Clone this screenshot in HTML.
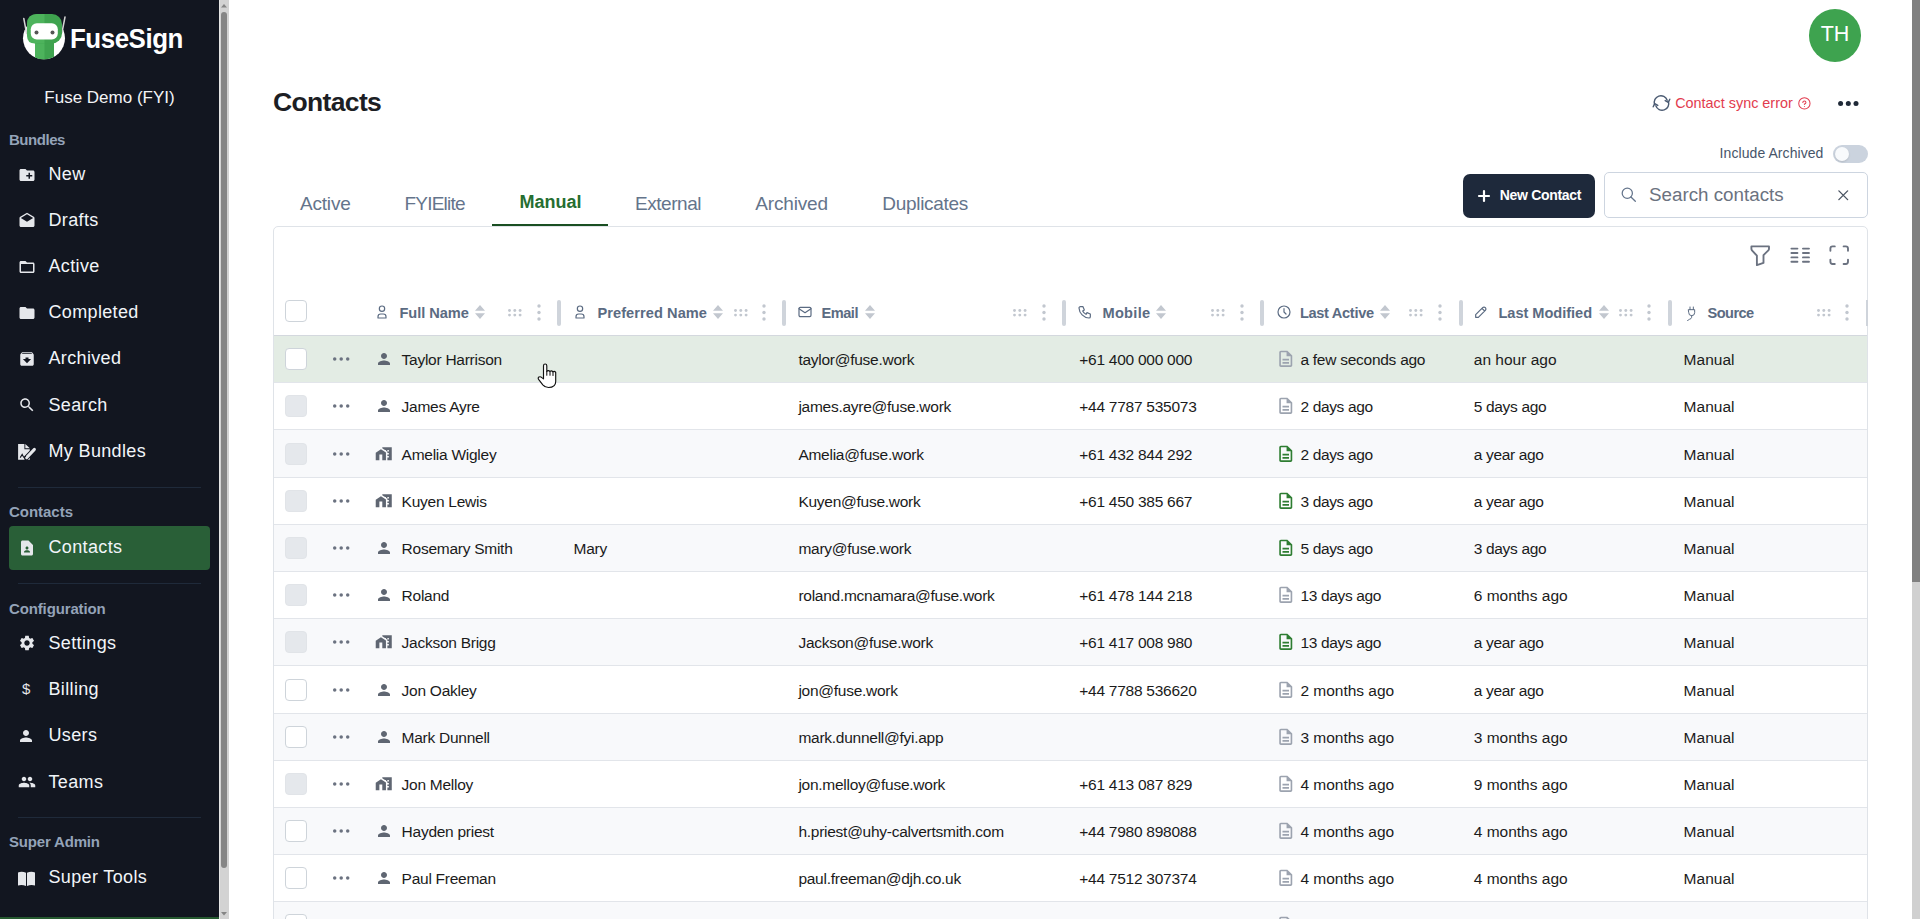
<!DOCTYPE html><html><head><meta charset="utf-8"><title>Contacts</title><style>
*{margin:0;padding:0;box-sizing:border-box}
html,body{width:1920px;height:919px;overflow:hidden;background:#fff;font-family:"Liberation Sans",sans-serif}
.t{position:absolute;white-space:nowrap}
.i{position:absolute;overflow:visible}
.b{position:absolute}
</style></head><body>
<div class="b" style="left:0px;top:0px;width:219px;height:919px;background:#121620"></div>
<div class="b" style="left:0px;top:917px;width:219px;height:2px;background:#265a30"></div>
<div class="b" style="left:219px;top:0px;width:10px;height:919px;background:#d3d3d3;border-left:1px solid #e6e6e6"></div>
<div class="b" style="left:221px;top:12px;width:6px;height:856px;background:#858585;border-radius:3px"></div>
<svg class="i" style="left:221px;top:3.5px;width:6px;height:3.5px;" viewBox="0 0 6 3.5"><path d="M0 3.5 L3 0 L6 3.5Z" fill="#858585"/></svg>
<svg class="i" style="left:221px;top:911.5px;width:6px;height:3.5px;" viewBox="0 0 6 3.5"><path d="M0 0 L3 3.5 L6 0Z" fill="#858585"/></svg>
<svg class="i" style="left:23px;top:13.5px;width:42px;height:46px;" viewBox="0 0 42 46">
<defs><clipPath id="lc"><circle cx="21" cy="24.3" r="21"/></clipPath></defs>
<circle cx="21" cy="24.3" r="21" fill="#fff"/>
<g clip-path="url(#lc)">
<rect x="12" y="26" width="19" height="22" fill="#3fa34f"/>
<rect x="12" y="26" width="9.5" height="22" fill="#4db35c"/>
</g>
<line x1="0.8" y1="4.5" x2="3.6" y2="19.5" stroke="#d4d4d4" stroke-width="1.5" stroke-linecap="round"/>
<line x1="42" y1="3" x2="39" y2="18.5" stroke="#d4d4d4" stroke-width="1.5" stroke-linecap="round"/>
<rect x="4" y="0" width="35" height="29.5" rx="10" fill="#3fa34f"/>
<path d="M14 0 H21.5 V29.5 H12 Q4 29.5 4 21.5 V10 Q4 0 14 0Z" fill="#4db35c"/>
<rect x="7.8" y="9.2" width="27" height="16.2" rx="6" fill="#fff"/>
<circle cx="13.5" cy="18.5" r="2" fill="#555"/>
<circle cx="29.5" cy="18.5" r="2" fill="#555"/>
</svg>
<div class="t " style="left:70px;top:25.10px;font-size:28px;line-height:28px;color:#fff;font-weight:bold;letter-spacing:-0.5px;transform:scaleX(0.925);transform-origin:0 0">FuseSign</div>
<div class="t" style="left:-90.5px;width:400px;text-align:center;top:89.11px;font-size:17px;line-height:17px;color:#f3f4f6">Fuse Demo (FYI)</div>
<div class="t " style="left:9px;top:132.10px;font-size:15px;line-height:15px;color:#94a3b8;font-weight:bold;letter-spacing:0px;letter-spacing:-0.462px">Bundles</div>
<div class="t " style="left:48.5px;top:165.36px;font-size:18px;line-height:18px;color:#f1f5f9;letter-spacing:0.35px">New</div>
<svg class="i" style="left:17.5px;top:165.6px;width:18px;height:18px;" viewBox="0 0 24 24"><path d="M20 6h-8l-2-2H4c-1.11 0-1.99.89-1.99 2L2 18c0 1.11.89 2 2 2h16c1.11 0 2-.89 2-2V8c0-1.11-.89-2-2-2zm-1 8h-3v3h-2v-3h-3v-2h3V9h2v3h3v2z" fill="#e5e7eb"/></svg>
<div class="t " style="left:48.5px;top:211.36px;font-size:18px;line-height:18px;color:#f1f5f9;letter-spacing:0.35px">Drafts</div>
<svg class="i" style="left:17.5px;top:211.6px;width:18px;height:18px;" viewBox="0 0 24 24"><path d="M21.99 8c0-.72-.37-1.35-.94-1.7L12 1 2.95 6.3C2.38 6.65 2 7.28 2 8v10c0 1.1.9 2 2 2h16c1.1 0 2-.9 2-2l-.01-10zM12 13L3.74 7.84 12 3l8.26 4.84L12 13z" fill="#e5e7eb"/></svg>
<div class="t " style="left:48.5px;top:257.36px;font-size:18px;line-height:18px;color:#f1f5f9;letter-spacing:0.35px">Active</div>
<svg class="i" style="left:17.5px;top:257.6px;width:18px;height:18px;" viewBox="0 0 24 24"><path d="M20 6h-8l-2-2H4c-1.1 0-1.99.9-1.99 2L2 18c0 1.1.9 2 2 2h16c1.1 0 2-.9 2-2V8c0-1.1-.9-2-2-2zm0 12H4V8h16v10z" fill="#e5e7eb"/></svg>
<div class="t " style="left:48.5px;top:303.36px;font-size:18px;line-height:18px;color:#f1f5f9;letter-spacing:0.35px">Completed</div>
<svg class="i" style="left:17.5px;top:303.6px;width:18px;height:18px;" viewBox="0 0 24 24"><path d="M10 4H4c-1.1 0-1.99.9-1.99 2L2 18c0 1.1.9 2 2 2h16c1.1 0 2-.9 2-2V8c0-1.1-.9-2-2-2h-8l-2-2z" fill="#e5e7eb"/></svg>
<div class="t " style="left:48.5px;top:349.36px;font-size:18px;line-height:18px;color:#f1f5f9;letter-spacing:0.35px">Archived</div>
<svg class="i" style="left:17.5px;top:349.6px;width:18px;height:18px;" viewBox="0 0 24 24"><path d="M20.54 5.23l-1.39-1.68C18.88 3.21 18.47 3 18 3H6c-.47 0-.88.21-1.16.55L3.46 5.23C3.17 5.57 3 6.02 3 6.5V19c0 1.1.9 2 2 2h14c1.1 0 2-.9 2-2V6.5c0-.48-.17-.93-.46-1.27zM12 17.5L6.5 12H10v-2h4v2h3.5L12 17.5zM5.12 5l.81-1h12l.94 1H5.12z" fill="#e5e7eb"/></svg>
<div class="t " style="left:48.5px;top:395.76px;font-size:18px;line-height:18px;color:#f1f5f9;letter-spacing:0.35px">Search</div>
<svg class="i" style="left:17.5px;top:396px;width:18px;height:18px;" viewBox="0 0 24 24"><path d="M15.5 14h-.79l-.28-.27C15.41 12.59 16 11.11 16 9.5 16 5.91 13.09 3 9.5 3S3 5.91 3 9.5 5.91 16 9.5 16c1.61 0 3.09-.59 4.23-1.57l.27.28v.79l5 4.99L20.49 19l-4.99-5zm-6 0C7.01 14 5 11.99 5 9.5S7.01 5 9.5 5 14 7.01 14 9.5 11.99 14 9.5 14z" fill="#e5e7eb"/></svg>
<div class="t " style="left:48.5px;top:442.06px;font-size:18px;line-height:18px;color:#f1f5f9;letter-spacing:0.35px">My Bundles</div>
<svg class="i" style="left:14px;top:438px;width:26px;height:26px;" viewBox="0 0 26 26"><path d="M4.1 5.9 H10.4 V11.2 H15.8 V13.6 L11.2 18.6 L10.6 21.8 H4.1Z" fill="#e5e7eb"/><path d="M11.3 5.9 L15.8 10.3 H11.3Z" fill="#e5e7eb"/><path d="M10.8 21.8 H15.8 V17.5 L13 20.6Z" fill="#e5e7eb"/><path d="M12.4 19.8 L20.6 11.2" stroke="#121620" stroke-width="5" stroke-linecap="round"/><path d="M12.6 19.6 L20.4 11.4" stroke="#e5e7eb" stroke-width="3" stroke-linecap="round"/><path d="M6.2 19.6 L8.2 16.4 L9.6 19.2 L12 18.4" stroke="#121620" stroke-width="1.1" fill="none"/></svg>
<div class="b" style="left:18px;top:487px;width:183px;height:1px;background:#1f2a3a"></div>
<div class="t " style="left:9px;top:504.00px;font-size:15px;line-height:15px;color:#94a3b8;font-weight:bold;letter-spacing:0px;letter-spacing:-0.025px">Contacts</div>
<div class="b" style="left:9px;top:526px;width:201px;height:44px;background:#295f37;border-radius:4px"></div>
<svg class="i" style="left:18px;top:538.5px;width:18px;height:18px;" viewBox="0 0 24 24"><path d="M14 2H6c-1.1 0-1.99.9-1.99 2L4 20c0 1.1.89 2 1.99 2H18c1.1 0 2-.9 2-2V8l-6-6zm-2 8c1.1 0 2 .9 2 2s-.9 2-2 2-2-.9-2-2 .9-2 2-2zm4 8H8v-.57c0-.81.48-1.53 1.22-1.85.85-.37 1.790-.58 2.78-.58.99 0 1.93.21 2.78.58.74.32 1.22 1.04 1.22 1.85V18z" fill="#e5e7eb"/></svg>
<div class="t " style="left:48.5px;top:537.66px;font-size:18px;line-height:18px;color:#f1f5f9;letter-spacing:0.35px">Contacts</div>
<div class="b" style="left:18px;top:583px;width:183px;height:1px;background:#1f2a3a"></div>
<div class="t " style="left:9px;top:600.50px;font-size:15px;line-height:15px;color:#94a3b8;font-weight:bold;letter-spacing:0px;letter-spacing:-0.134px">Configuration</div>
<div class="t " style="left:48.5px;top:633.96px;font-size:18px;line-height:18px;color:#f1f5f9;letter-spacing:0.35px">Settings</div>
<svg class="i" style="left:17.5px;top:634px;width:18px;height:18px;" viewBox="0 0 24 24"><path d="M19.14 12.94c.04-.3.06-.61.06-.94 0-.32-.02-.64-.07-.94l2.03-1.58c.18-.14.23-.41.12-.61l-1.92-3.32c-.12-.22-.37-.29-.59-.22l-2.39.96c-.5-.38-1.03-.7-1.62-.94l-.36-2.54c-.04-.24-.24-.41-.48-.41h-3.84c-.24 0-.43.17-.47.41l-.36 2.54c-.59.24-1.130.57-1.62.94l-2.39-.96c-.22-.08-.47 0-.59.22L2.74 8.87c-.12.21-.08.47.12.61l2.030 1.58c-.05.3-.09.63-.09.94s.02.64.07.94l-2.03 1.58c-.18.14-.23.41-.12.61l1.92 3.32c.12.22.37.29.59.22l2.39-.96c.5.38 1.03.7 1.62.94l.36 2.54c.05.24.24.41.48.41h3.84c.24 0 .44-.17.47-.41l.36-2.54c.59-.24 1.13-.56 1.62-.94l2.39.96c.22.08.47 0 .59-.22l1.92-3.32c.12-.22.07-.47-.12-.61l-2.01-1.58zM12 15.6c-1.98 0-3.6-1.62-3.6-3.6s1.62-3.6 3.6-3.6 3.6 1.62 3.6 3.6-1.62 3.6-3.6 3.6z" fill="#e5e7eb"/></svg>
<div class="t " style="left:48.5px;top:680.26px;font-size:18px;line-height:18px;color:#f1f5f9;letter-spacing:0.35px">Billing</div>
<div class="t " style="left:22px;top:681.30px;font-size:15px;line-height:15px;color:#e5e7eb">$</div>
<div class="t " style="left:48.5px;top:725.96px;font-size:18px;line-height:18px;color:#f1f5f9;letter-spacing:0.35px">Users</div>
<svg class="i" style="left:17px;top:726.5px;width:18px;height:18px;" viewBox="0 0 24 24"><path d="M12 12c2.21 0 4-1.79 4-4s-1.79-4-4-4-4 1.79-4 4 1.79 4 4 4zm0 2c-2.67 0-8 1.34-8 4v2h16v-2c0-2.66-5.33-4-8-4z" fill="#e5e7eb"/></svg>
<div class="t " style="left:48.5px;top:772.76px;font-size:18px;line-height:18px;color:#f1f5f9;letter-spacing:0.35px">Teams</div>
<svg class="i" style="left:17.5px;top:773px;width:18px;height:18px;" viewBox="0 0 24 24"><path d="M16 11c1.66 0 2.99-1.34 2.99-3S17.66 5 16 5c-1.66 0-3 1.34-3 3s1.34 3 3 3zm-8 0c1.66 0 2.99-1.34 2.99-3S9.66 5 8 5C6.34 5 5 6.34 5 8s1.34 3 3 3zm0 2c-2.33 0-7 1.17-7 3.5V19h14v-2.5c0-2.33-4.67-3.5-7-3.5zm8 0c-.29 0-.62.02-.97.05 1.16.84 1.97 1.97 1.97 3.45V19h6v-2.5c0-2.33-4.67-3.5-7-3.5z" fill="#e5e7eb"/></svg>
<div class="b" style="left:18px;top:817px;width:183px;height:1px;background:#1f2a3a"></div>
<div class="t " style="left:9px;top:833.90px;font-size:15px;line-height:15px;color:#94a3b8;font-weight:bold;letter-spacing:0px;letter-spacing:-0.178px">Super Admin</div>
<div class="t " style="left:48.5px;top:867.76px;font-size:18px;line-height:18px;color:#f1f5f9;letter-spacing:0.35px">Super Tools</div>
<svg class="i" style="left:18px;top:870.5px;width:17px;height:15px;" viewBox="0 0 17 15"><path d="M0 1.5 Q4 0 8 1.8 V15 Q4 13.3 0 14.5Z M9 1.8 Q13 0 17 1.5 V14.5 Q13 13.3 9 15Z" fill="#e5e7eb"/></svg>
<div class="b" style="left:1912px;top:0px;width:8px;height:919px;background:#d0d0d0"></div>
<div class="b" style="left:1912px;top:0px;width:8px;height:582px;background:#808080"></div>
<div class="b" style="left:1809px;top:9px;width:52px;height:52.5px;border-radius:50%;background:#3ea34f"></div>
<div class="t" style="left:1805.0px;width:60px;text-align:center;top:24.40px;font-size:21.5px;line-height:21.5px;color:#fff">TH</div>
<div class="t " style="left:273px;top:89.07px;font-size:26.5px;line-height:26.5px;color:#1c1e24;font-weight:bold;letter-spacing:-0.654px">Contacts</div>
<svg class="i" style="left:1651.5px;top:95px;width:19px;height:16px;" viewBox="0 0 19 16"><path d="M2.6 9.5 A6.6 6.6 0 0 1 15.2 5.2 M16.4 6.5 A6.6 6.6 0 0 1 3.8 10.8" fill="none" stroke="#4b5b72" stroke-width="1.4" stroke-linecap="round"/><path d="M13.2 5.6 L16.3 7.4 L17.8 4.2 M5.8 10.4 L2.7 8.6 L1.2 11.8" fill="none" stroke="#4b5b72" stroke-width="1.4" stroke-linecap="round" stroke-linejoin="round"/></svg>
<div class="t " style="left:1675.2px;top:96.01px;font-size:14.4px;line-height:14.4px;color:#e23b4e">Contact sync error</div>
<svg class="i" style="left:1798.2px;top:97px;width:12.8px;height:12.8px;" viewBox="0 0 24 24"><circle cx="12" cy="12" r="10.6" fill="none" stroke="#e23b4e" stroke-width="1.9"/><path d="M12 17.6v.01M12 14.2v-.9a2.9 2.9 0 1 0 -2.9-2.9" fill="none" stroke="#e23b4e" stroke-width="1.9" stroke-linecap="round"/></svg>
<svg class="i" style="left:1836px;top:99px;width:24px;height:9px;" viewBox="0 0 24 9"><circle cx="4.6" cy="4.5" r="2.5" fill="#1f2937"/><circle cx="12.3" cy="4.5" r="2.5" fill="#1f2937"/><circle cx="20" cy="4.5" r="2.5" fill="#1f2937"/></svg>
<div class="t " style="left:1719.6px;top:146.15px;font-size:14px;line-height:14px;color:#475569;letter-spacing:0.071px">Include Archived</div>
<div class="b" style="left:1833px;top:145px;width:35px;height:18px;background:#cbd3de;border-radius:9px"></div>
<div class="b" style="left:1835px;top:147px;width:14px;height:14px;background:#f8fafc;border-radius:50%;box-shadow:0 1px 2px rgba(0,0,0,.12)"></div>
<div class="b" style="left:1463px;top:174px;width:132px;height:44px;background:#1e293b;border-radius:7px"></div>
<svg class="i" style="left:1477.5px;top:189.5px;width:12px;height:12px;" viewBox="0 0 12 12"><path d="M6 1v10M1 6h10" stroke="#fff" stroke-width="2.2" stroke-linecap="round"/></svg>
<div class="t " style="left:1499.7px;top:188.35px;font-size:14px;line-height:14px;color:#fff;font-weight:bold;letter-spacing:-0.3px">New Contact</div>
<div class="b" style="left:1604px;top:172px;width:264px;height:46px;border:1px solid #cdd5e0;border-radius:5px;background:#fff"></div>
<svg class="i" style="left:1620px;top:185.6px;width:17.5px;height:17.5px;" viewBox="0 0 24 24"><circle cx="10" cy="10" r="7" fill="none" stroke="#64748b" stroke-width="1.7"/><path d="M21 21l-6-6" stroke="#64748b" stroke-width="1.7" stroke-linecap="round"/></svg>
<div class="t " style="left:1649px;top:186.09px;font-size:18.8px;line-height:18.8px;color:#6b7280">Search contacts</div>
<svg class="i" style="left:1837.5px;top:189.5px;width:10.5px;height:10.5px;" viewBox="0 0 12 12"><path d="M1 1l10 10M11 1L1 11" stroke="#4b5563" stroke-width="1.6" stroke-linecap="round"/></svg>
<div class="t " style="left:300px;top:193.92px;font-size:19px;line-height:19px;color:#64748b;letter-spacing:-0.198px">Active</div>
<div class="t " style="left:404.5px;top:193.92px;font-size:19px;line-height:19px;color:#64748b;letter-spacing:-0.788px">FYIElite</div>
<div class="t " style="left:635px;top:193.92px;font-size:19px;line-height:19px;color:#64748b;letter-spacing:-0.457px">External</div>
<div class="t " style="left:755.2px;top:193.92px;font-size:19px;line-height:19px;color:#64748b;letter-spacing:-0.146px">Archived</div>
<div class="t " style="left:882.3px;top:193.92px;font-size:19px;line-height:19px;color:#64748b;letter-spacing:-0.301px">Duplicates</div>
<div class="t " style="left:519.5px;top:193.06px;font-size:18px;line-height:18px;color:#266e31;font-weight:bold">Manual</div>
<div class="b" style="left:492px;top:224px;width:116px;height:2.2px;background:#1a4f22"></div>
<div class="b" style="left:273px;top:226px;width:1595px;height:800px;border:1px solid #dfe3e8;border-radius:5px;background:#fff"></div>
<svg class="i" style="left:1746.9px;top:241.8px;width:26.4px;height:26.4px;" viewBox="0 0 24 24"><path d="M4 4h16v2.172a2 2 0 0 1 -.586 1.414l-4.414 4.414v7l-6 2v-8.5l-4.48 -4.928a2 2 0 0 1 -.52 -1.345v-2.227z" fill="none" stroke="#6b7280" stroke-width="1.7" stroke-linecap="round" stroke-linejoin="round"/></svg>
<svg class="i" style="left:1786.8px;top:241.7px;width:26.4px;height:26.4px;" viewBox="0 0 24 24"><path d="M4 6h5.5M4 10h5.5M4 14h5.5M4 18h5.5M14.5 6h5.5M14.5 10h5.5M14.5 14h5.5M14.5 18h5.5" fill="none" stroke="#6b7280" stroke-width="1.7" stroke-linecap="round" stroke-linejoin="round"/></svg>
<svg class="i" style="left:1825.9px;top:241.9px;width:26.4px;height:26.4px;" viewBox="0 0 24 24"><path d="M4 8v-2a2 2 0 0 1 2 -2h2M4 16v2a2 2 0 0 0 2 2h2M16 4h2a2 2 0 0 1 2 2v2M16 20h2a2 2 0 0 0 2 -2v-2" fill="none" stroke="#6b7280" stroke-width="1.7" stroke-linecap="round" stroke-linejoin="round"/></svg>
<div class="b" style="left:285px;top:300px;width:22px;height:22px;border:1px solid #ced4da;border-radius:4px;background:#fff"></div>
<div class="b" style="left:274px;top:335px;width:1593px;height:1px;background:#d4d8de"></div>
<svg class="i" style="left:374px;top:303.6px;width:16px;height:16px;" viewBox="0 0 24 24"><circle cx="12" cy="7" r="4" fill="none" stroke="#5b6b82" stroke-width="1.8" stroke-linecap="round" stroke-linejoin="round"/><path d="M6 21v-2a4 4 0 0 1 4 -4h4a4 4 0 0 1 4 4v2z" fill="none" stroke="#5b6b82" stroke-width="1.8" stroke-linecap="round" stroke-linejoin="round"/></svg>
<div class="t " style="left:399.5px;top:305.54px;font-size:14.6px;line-height:14.6px;color:#5b6b82;font-weight:bold;letter-spacing:-0.059px">Full Name</div>
<svg class="i" style="left:475px;top:305px;width:10px;height:14px;" viewBox="0 0 10 14"><path d="M0 5.7L5 0L10 5.7Z M0 8.3L5 14L10 8.3Z" fill="#c2c7cf"/></svg>
<svg class="i" style="left:508px;top:308.5px;width:14px;height:8px;" viewBox="0 0 14 8"><circle cx="1.5" cy="1.5" r="1.45" fill="#c2c7cf"/><circle cx="6.8" cy="1.5" r="1.45" fill="#c2c7cf"/><circle cx="12.1" cy="1.5" r="1.45" fill="#c2c7cf"/><circle cx="1.5" cy="6.1" r="1.45" fill="#c2c7cf"/><circle cx="6.8" cy="6.1" r="1.45" fill="#c2c7cf"/><circle cx="12.1" cy="6.1" r="1.45" fill="#c2c7cf"/></svg>
<svg class="i" style="left:537px;top:303.5px;width:4px;height:17px;" viewBox="0 0 4 17"><circle cx="2" cy="2" r="1.7" fill="#c2c7cf"/><circle cx="2" cy="8.5" r="1.7" fill="#c2c7cf"/><circle cx="2" cy="15" r="1.7" fill="#c2c7cf"/></svg>
<div class="b" style="left:557px;top:300px;width:4px;height:26px;background:#cfd4db;border-radius:2px"></div>
<svg class="i" style="left:572px;top:303.6px;width:16px;height:16px;" viewBox="0 0 24 24"><circle cx="12" cy="7" r="4" fill="none" stroke="#5b6b82" stroke-width="1.8" stroke-linecap="round" stroke-linejoin="round"/><path d="M6 21v-2a4 4 0 0 1 4 -4h4a4 4 0 0 1 4 4v2z" fill="none" stroke="#5b6b82" stroke-width="1.8" stroke-linecap="round" stroke-linejoin="round"/></svg>
<div class="t " style="left:597.5px;top:305.54px;font-size:14.6px;line-height:14.6px;color:#5b6b82;font-weight:bold;letter-spacing:0.058px">Preferred Name</div>
<svg class="i" style="left:713px;top:305px;width:10px;height:14px;" viewBox="0 0 10 14"><path d="M0 5.7L5 0L10 5.7Z M0 8.3L5 14L10 8.3Z" fill="#c2c7cf"/></svg>
<svg class="i" style="left:734px;top:308.5px;width:14px;height:8px;" viewBox="0 0 14 8"><circle cx="1.5" cy="1.5" r="1.45" fill="#c2c7cf"/><circle cx="6.8" cy="1.5" r="1.45" fill="#c2c7cf"/><circle cx="12.1" cy="1.5" r="1.45" fill="#c2c7cf"/><circle cx="1.5" cy="6.1" r="1.45" fill="#c2c7cf"/><circle cx="6.8" cy="6.1" r="1.45" fill="#c2c7cf"/><circle cx="12.1" cy="6.1" r="1.45" fill="#c2c7cf"/></svg>
<svg class="i" style="left:762px;top:303.5px;width:4px;height:17px;" viewBox="0 0 4 17"><circle cx="2" cy="2" r="1.7" fill="#c2c7cf"/><circle cx="2" cy="8.5" r="1.7" fill="#c2c7cf"/><circle cx="2" cy="15" r="1.7" fill="#c2c7cf"/></svg>
<div class="b" style="left:782px;top:300px;width:4px;height:26px;background:#cfd4db;border-radius:2px"></div>
<svg class="i" style="left:797px;top:303.6px;width:16px;height:16px;" viewBox="0 0 24 24"><rect x="3" y="5" width="18" height="14" rx="2" fill="none" stroke="#5b6b82" stroke-width="1.8" stroke-linecap="round" stroke-linejoin="round"/><path d="M3 7l9 6l9 -6" fill="none" stroke="#5b6b82" stroke-width="1.8" stroke-linecap="round" stroke-linejoin="round"/></svg>
<div class="t " style="left:821.5px;top:305.54px;font-size:14.6px;line-height:14.6px;color:#5b6b82;font-weight:bold;letter-spacing:-0.488px">Email</div>
<svg class="i" style="left:865px;top:305px;width:10px;height:14px;" viewBox="0 0 10 14"><path d="M0 5.7L5 0L10 5.7Z M0 8.3L5 14L10 8.3Z" fill="#c2c7cf"/></svg>
<svg class="i" style="left:1013px;top:308.5px;width:14px;height:8px;" viewBox="0 0 14 8"><circle cx="1.5" cy="1.5" r="1.45" fill="#c2c7cf"/><circle cx="6.8" cy="1.5" r="1.45" fill="#c2c7cf"/><circle cx="12.1" cy="1.5" r="1.45" fill="#c2c7cf"/><circle cx="1.5" cy="6.1" r="1.45" fill="#c2c7cf"/><circle cx="6.8" cy="6.1" r="1.45" fill="#c2c7cf"/><circle cx="12.1" cy="6.1" r="1.45" fill="#c2c7cf"/></svg>
<svg class="i" style="left:1042px;top:303.5px;width:4px;height:17px;" viewBox="0 0 4 17"><circle cx="2" cy="2" r="1.7" fill="#c2c7cf"/><circle cx="2" cy="8.5" r="1.7" fill="#c2c7cf"/><circle cx="2" cy="15" r="1.7" fill="#c2c7cf"/></svg>
<div class="b" style="left:1062px;top:300px;width:4px;height:26px;background:#cfd4db;border-radius:2px"></div>
<svg class="i" style="left:1077px;top:303.6px;width:16px;height:16px;" viewBox="0 0 24 24"><path d="M5 4h4l2 5l-2.5 1.5a11 11 0 0 0 5 5l1.5 -2.5l5 2v4a2 2 0 0 1 -2 2a16 16 0 0 1 -15 -15a2 2 0 0 1 2 -2" fill="none" stroke="#5b6b82" stroke-width="1.8" stroke-linecap="round" stroke-linejoin="round"/></svg>
<div class="t " style="left:1102.5px;top:305.54px;font-size:14.6px;line-height:14.6px;color:#5b6b82;font-weight:bold;letter-spacing:0.274px">Mobile</div>
<svg class="i" style="left:1156px;top:305px;width:10px;height:14px;" viewBox="0 0 10 14"><path d="M0 5.7L5 0L10 5.7Z M0 8.3L5 14L10 8.3Z" fill="#c2c7cf"/></svg>
<svg class="i" style="left:1211px;top:308.5px;width:14px;height:8px;" viewBox="0 0 14 8"><circle cx="1.5" cy="1.5" r="1.45" fill="#c2c7cf"/><circle cx="6.8" cy="1.5" r="1.45" fill="#c2c7cf"/><circle cx="12.1" cy="1.5" r="1.45" fill="#c2c7cf"/><circle cx="1.5" cy="6.1" r="1.45" fill="#c2c7cf"/><circle cx="6.8" cy="6.1" r="1.45" fill="#c2c7cf"/><circle cx="12.1" cy="6.1" r="1.45" fill="#c2c7cf"/></svg>
<svg class="i" style="left:1240px;top:303.5px;width:4px;height:17px;" viewBox="0 0 4 17"><circle cx="2" cy="2" r="1.7" fill="#c2c7cf"/><circle cx="2" cy="8.5" r="1.7" fill="#c2c7cf"/><circle cx="2" cy="15" r="1.7" fill="#c2c7cf"/></svg>
<div class="b" style="left:1260px;top:300px;width:4px;height:26px;background:#cfd4db;border-radius:2px"></div>
<svg class="i" style="left:1276px;top:303.6px;width:16px;height:16px;" viewBox="0 0 24 24"><circle cx="12" cy="12" r="9" fill="none" stroke="#5b6b82" stroke-width="1.8" stroke-linecap="round" stroke-linejoin="round"/><path d="M12 7v5l3 3" fill="none" stroke="#5b6b82" stroke-width="1.8" stroke-linecap="round" stroke-linejoin="round"/></svg>
<div class="t " style="left:1299.9px;top:305.54px;font-size:14.6px;line-height:14.6px;color:#5b6b82;font-weight:bold;letter-spacing:-0.316px">Last Active</div>
<svg class="i" style="left:1380px;top:305px;width:10px;height:14px;" viewBox="0 0 10 14"><path d="M0 5.7L5 0L10 5.7Z M0 8.3L5 14L10 8.3Z" fill="#c2c7cf"/></svg>
<svg class="i" style="left:1409px;top:308.5px;width:14px;height:8px;" viewBox="0 0 14 8"><circle cx="1.5" cy="1.5" r="1.45" fill="#c2c7cf"/><circle cx="6.8" cy="1.5" r="1.45" fill="#c2c7cf"/><circle cx="12.1" cy="1.5" r="1.45" fill="#c2c7cf"/><circle cx="1.5" cy="6.1" r="1.45" fill="#c2c7cf"/><circle cx="6.8" cy="6.1" r="1.45" fill="#c2c7cf"/><circle cx="12.1" cy="6.1" r="1.45" fill="#c2c7cf"/></svg>
<svg class="i" style="left:1438px;top:303.5px;width:4px;height:17px;" viewBox="0 0 4 17"><circle cx="2" cy="2" r="1.7" fill="#c2c7cf"/><circle cx="2" cy="8.5" r="1.7" fill="#c2c7cf"/><circle cx="2" cy="15" r="1.7" fill="#c2c7cf"/></svg>
<div class="b" style="left:1459px;top:300px;width:4px;height:26px;background:#cfd4db;border-radius:2px"></div>
<svg class="i" style="left:1473px;top:303.6px;width:16px;height:16px;" viewBox="0 0 24 24"><path d="M4 20h4l10.5 -10.5a2.828 2.828 0 1 0 -4 -4l-10.5 10.5v4M13.5 6.5l4 4" fill="none" stroke="#5b6b82" stroke-width="1.8" stroke-linecap="round" stroke-linejoin="round"/></svg>
<div class="t " style="left:1498.5px;top:305.54px;font-size:14.6px;line-height:14.6px;color:#5b6b82;font-weight:bold;letter-spacing:-0.041px">Last Modified</div>
<svg class="i" style="left:1598.5px;top:305px;width:10px;height:14px;" viewBox="0 0 10 14"><path d="M0 5.7L5 0L10 5.7Z M0 8.3L5 14L10 8.3Z" fill="#c2c7cf"/></svg>
<svg class="i" style="left:1619px;top:308.5px;width:14px;height:8px;" viewBox="0 0 14 8"><circle cx="1.5" cy="1.5" r="1.45" fill="#c2c7cf"/><circle cx="6.8" cy="1.5" r="1.45" fill="#c2c7cf"/><circle cx="12.1" cy="1.5" r="1.45" fill="#c2c7cf"/><circle cx="1.5" cy="6.1" r="1.45" fill="#c2c7cf"/><circle cx="6.8" cy="6.1" r="1.45" fill="#c2c7cf"/><circle cx="12.1" cy="6.1" r="1.45" fill="#c2c7cf"/></svg>
<svg class="i" style="left:1647px;top:303.5px;width:4px;height:17px;" viewBox="0 0 4 17"><circle cx="2" cy="2" r="1.7" fill="#c2c7cf"/><circle cx="2" cy="8.5" r="1.7" fill="#c2c7cf"/><circle cx="2" cy="15" r="1.7" fill="#c2c7cf"/></svg>
<div class="b" style="left:1668px;top:300px;width:4px;height:26px;background:#cfd4db;border-radius:2px"></div>
<svg class="i" style="left:1683px;top:303.6px;width:16px;height:16px;" viewBox="0 0 24 24"><path d="M10.5 4.5V8.5M15.5 4.5V8.5M8.5 8.5H17.5V13A4.5 4.5 0 0 1 8.5 13Z M13 17.5V20Q12.6 22.3 9.6 23Q7.8 23.6 6.8 25" fill="none" stroke="#5b6b82" stroke-width="1.5" stroke-linecap="round" stroke-linejoin="round"/></svg>
<div class="t " style="left:1707.5px;top:305.54px;font-size:14.6px;line-height:14.6px;color:#5b6b82;font-weight:bold;letter-spacing:-0.559px">Source</div>
<svg class="i" style="left:1817px;top:308.5px;width:14px;height:8px;" viewBox="0 0 14 8"><circle cx="1.5" cy="1.5" r="1.45" fill="#c2c7cf"/><circle cx="6.8" cy="1.5" r="1.45" fill="#c2c7cf"/><circle cx="12.1" cy="1.5" r="1.45" fill="#c2c7cf"/><circle cx="1.5" cy="6.1" r="1.45" fill="#c2c7cf"/><circle cx="6.8" cy="6.1" r="1.45" fill="#c2c7cf"/><circle cx="12.1" cy="6.1" r="1.45" fill="#c2c7cf"/></svg>
<svg class="i" style="left:1845px;top:303.5px;width:4px;height:17px;" viewBox="0 0 4 17"><circle cx="2" cy="2" r="1.7" fill="#c2c7cf"/><circle cx="2" cy="8.5" r="1.7" fill="#c2c7cf"/><circle cx="2" cy="15" r="1.7" fill="#c2c7cf"/></svg>
<div class="b" style="left:1866px;top:300px;width:1.5px;height:26px;background:#cfd4db"></div>
<div class="b" style="left:274px;top:336px;width:1593px;height:46px;background:#e3ece4"></div>
<div class="b" style="left:274px;top:382px;width:1593px;height:1px;background:#e2e5ea"></div>
<div class="b" style="left:285px;top:348.38px;width:22px;height:22px;background:#fff;border:1px solid #ced4da;border-radius:4px"></div>
<svg class="i" style="left:330px;top:355.98px;width:22px;height:6px;" viewBox="0 0 22 6"><circle cx="4.7" cy="3" r="1.75" fill="#6b7280"/><circle cx="11.2" cy="3" r="1.75" fill="#6b7280"/><circle cx="17.7" cy="3" r="1.75" fill="#6b7280"/></svg>
<svg class="i" style="left:374.8px;top:350.08px;width:18px;height:18px;" viewBox="0 0 24 24"><path d="M12 12c2.21 0 4-1.79 4-4s-1.79-4-4-4-4 1.79-4 4 1.79 4 4 4zm0 2c-2.67 0-8 1.34-8 4v2h16v-2c0-2.66-5.33-4-8-4z" fill="#5f6672"/></svg>
<div class="t " style="left:401.6px;top:351.88px;font-size:15.5px;line-height:15.5px;color:#1b1b1b;letter-spacing:-0.26px">Taylor Harrison</div>
<div class="t " style="left:798.4px;top:351.88px;font-size:15.5px;line-height:15.5px;color:#1b1b1b;letter-spacing:-0.26px">taylor@fuse.work</div>
<div class="t " style="left:1079.3px;top:351.88px;font-size:15.5px;line-height:15.5px;color:#1b1b1b;letter-spacing:-0.26px">+61 400 000 000</div>
<svg class="i" style="left:1275.9px;top:349.08px;width:19.5px;height:19.5px;" viewBox="0 0 24 24"><path d="M8 16h8v2H8zm0-4h8v2H8zm6-10H6c-1.1 0-2 .9-2 2v16c0 1.1.89 2 1.99 2H18c1.1 0 2-.9 2-2V8l-6-6zm4 18H6V4h7v5h5v11z" fill="#9ca3af"/></svg>
<div class="t " style="left:1300.4px;top:351.88px;font-size:15.5px;line-height:15.5px;color:#1b1b1b;letter-spacing:-0.260px">a few seconds ago</div>
<div class="t " style="left:1473.8px;top:351.88px;font-size:15.5px;line-height:15.5px;color:#1b1b1b;letter-spacing:0.000px">an hour ago</div>
<div class="t " style="left:1683.6px;top:351.88px;font-size:15.5px;line-height:15.5px;color:#1b1b1b;letter-spacing:0.020px">Manual</div>
<div class="b" style="left:274px;top:383px;width:1593px;height:46px;background:#fff"></div>
<div class="b" style="left:274px;top:429px;width:1593px;height:1px;background:#e2e5ea"></div>
<div class="b" style="left:285px;top:395.38px;width:22px;height:22px;background:#e5e8ec;border:1px solid #e1e4e8;border-radius:4px"></div>
<svg class="i" style="left:330px;top:402.98px;width:22px;height:6px;" viewBox="0 0 22 6"><circle cx="4.7" cy="3" r="1.75" fill="#6b7280"/><circle cx="11.2" cy="3" r="1.75" fill="#6b7280"/><circle cx="17.7" cy="3" r="1.75" fill="#6b7280"/></svg>
<svg class="i" style="left:374.8px;top:397.08px;width:18px;height:18px;" viewBox="0 0 24 24"><path d="M12 12c2.21 0 4-1.79 4-4s-1.79-4-4-4-4 1.79-4 4 1.79 4 4 4zm0 2c-2.67 0-8 1.34-8 4v2h16v-2c0-2.66-5.33-4-8-4z" fill="#5f6672"/></svg>
<div class="t " style="left:401.6px;top:398.88px;font-size:15.5px;line-height:15.5px;color:#1b1b1b;letter-spacing:-0.26px">James Ayre</div>
<div class="t " style="left:798.4px;top:398.88px;font-size:15.5px;line-height:15.5px;color:#1b1b1b;letter-spacing:-0.26px">james.ayre@fuse.work</div>
<div class="t " style="left:1079.3px;top:398.88px;font-size:15.5px;line-height:15.5px;color:#1b1b1b;letter-spacing:-0.26px">+44 7787 535073</div>
<svg class="i" style="left:1275.9px;top:396.08px;width:19.5px;height:19.5px;" viewBox="0 0 24 24"><path d="M8 16h8v2H8zm0-4h8v2H8zm6-10H6c-1.1 0-2 .9-2 2v16c0 1.1.89 2 1.99 2H18c1.1 0 2-.9 2-2V8l-6-6zm4 18H6V4h7v5h5v11z" fill="#9ca3af"/></svg>
<div class="t " style="left:1300.4px;top:398.88px;font-size:15.5px;line-height:15.5px;color:#1b1b1b;letter-spacing:-0.340px">2 days ago</div>
<div class="t " style="left:1473.8px;top:398.88px;font-size:15.5px;line-height:15.5px;color:#1b1b1b;letter-spacing:-0.340px">5 days ago</div>
<div class="t " style="left:1683.6px;top:398.88px;font-size:15.5px;line-height:15.5px;color:#1b1b1b;letter-spacing:0.020px">Manual</div>
<div class="b" style="left:274px;top:430px;width:1593px;height:47px;background:#f8f9fb"></div>
<div class="b" style="left:274px;top:477px;width:1593px;height:1px;background:#e2e5ea"></div>
<div class="b" style="left:285px;top:443.38px;width:22px;height:22px;background:#e5e8ec;border:1px solid #e1e4e8;border-radius:4px"></div>
<svg class="i" style="left:330px;top:450.98px;width:22px;height:6px;" viewBox="0 0 22 6"><circle cx="4.7" cy="3" r="1.75" fill="#6b7280"/><circle cx="11.2" cy="3" r="1.75" fill="#6b7280"/><circle cx="17.7" cy="3" r="1.75" fill="#6b7280"/></svg>
<svg class="i" style="left:375.2px;top:445.48px;width:17.5px;height:17.5px;" viewBox="0 0 24 24"><path d="M8.17 5.7 1 10.48V21h5v-8h4v8h5V10.25z M10 3v1.51l2 1.33L13.73 7H15v.85l2 1.34V11h2v2h-2v2h2v2h-2v4h6V3H10zm9 6h-2V7h2v2z" fill="#5f6672" fill-rule="evenodd"/></svg>
<div class="t " style="left:401.6px;top:446.88px;font-size:15.5px;line-height:15.5px;color:#1b1b1b;letter-spacing:-0.26px">Amelia Wigley</div>
<div class="t " style="left:798.4px;top:446.88px;font-size:15.5px;line-height:15.5px;color:#1b1b1b;letter-spacing:-0.26px">Amelia@fuse.work</div>
<div class="t " style="left:1079.3px;top:446.88px;font-size:15.5px;line-height:15.5px;color:#1b1b1b;letter-spacing:-0.26px">+61 432 844 292</div>
<svg class="i" style="left:1275.9px;top:444.08px;width:19.5px;height:19.5px;" viewBox="0 0 24 24"><path d="M8 16h8v2H8zm0-4h8v2H8zm6-10H6c-1.1 0-2 .9-2 2v16c0 1.1.89 2 1.99 2H18c1.1 0 2-.9 2-2V8l-6-6zm4 18H6V4h7v5h5v11z" fill="#2e7d32"/></svg>
<div class="t " style="left:1300.4px;top:446.88px;font-size:15.5px;line-height:15.5px;color:#1b1b1b;letter-spacing:-0.340px">2 days ago</div>
<div class="t " style="left:1473.8px;top:446.88px;font-size:15.5px;line-height:15.5px;color:#1b1b1b;letter-spacing:-0.340px">a year ago</div>
<div class="t " style="left:1683.6px;top:446.88px;font-size:15.5px;line-height:15.5px;color:#1b1b1b;letter-spacing:0.020px">Manual</div>
<div class="b" style="left:274px;top:478px;width:1593px;height:46px;background:#fff"></div>
<div class="b" style="left:274px;top:524px;width:1593px;height:1px;background:#e2e5ea"></div>
<div class="b" style="left:285px;top:490.38px;width:22px;height:22px;background:#e5e8ec;border:1px solid #e1e4e8;border-radius:4px"></div>
<svg class="i" style="left:330px;top:497.98px;width:22px;height:6px;" viewBox="0 0 22 6"><circle cx="4.7" cy="3" r="1.75" fill="#6b7280"/><circle cx="11.2" cy="3" r="1.75" fill="#6b7280"/><circle cx="17.7" cy="3" r="1.75" fill="#6b7280"/></svg>
<svg class="i" style="left:375.2px;top:492.48px;width:17.5px;height:17.5px;" viewBox="0 0 24 24"><path d="M8.17 5.7 1 10.48V21h5v-8h4v8h5V10.25z M10 3v1.51l2 1.33L13.73 7H15v.85l2 1.34V11h2v2h-2v2h2v2h-2v4h6V3H10zm9 6h-2V7h2v2z" fill="#5f6672" fill-rule="evenodd"/></svg>
<div class="t " style="left:401.6px;top:493.88px;font-size:15.5px;line-height:15.5px;color:#1b1b1b;letter-spacing:-0.26px">Kuyen Lewis</div>
<div class="t " style="left:798.4px;top:493.88px;font-size:15.5px;line-height:15.5px;color:#1b1b1b;letter-spacing:-0.26px">Kuyen@fuse.work</div>
<div class="t " style="left:1079.3px;top:493.88px;font-size:15.5px;line-height:15.5px;color:#1b1b1b;letter-spacing:-0.26px">+61 450 385 667</div>
<svg class="i" style="left:1275.9px;top:491.08px;width:19.5px;height:19.5px;" viewBox="0 0 24 24"><path d="M8 16h8v2H8zm0-4h8v2H8zm6-10H6c-1.1 0-2 .9-2 2v16c0 1.1.89 2 1.99 2H18c1.1 0 2-.9 2-2V8l-6-6zm4 18H6V4h7v5h5v11z" fill="#2e7d32"/></svg>
<div class="t " style="left:1300.4px;top:493.88px;font-size:15.5px;line-height:15.5px;color:#1b1b1b;letter-spacing:-0.340px">3 days ago</div>
<div class="t " style="left:1473.8px;top:493.88px;font-size:15.5px;line-height:15.5px;color:#1b1b1b;letter-spacing:-0.340px">a year ago</div>
<div class="t " style="left:1683.6px;top:493.88px;font-size:15.5px;line-height:15.5px;color:#1b1b1b;letter-spacing:0.020px">Manual</div>
<div class="b" style="left:274px;top:525px;width:1593px;height:46px;background:#f8f9fb"></div>
<div class="b" style="left:274px;top:571px;width:1593px;height:1px;background:#e2e5ea"></div>
<div class="b" style="left:285px;top:537.38px;width:22px;height:22px;background:#e5e8ec;border:1px solid #e1e4e8;border-radius:4px"></div>
<svg class="i" style="left:330px;top:544.98px;width:22px;height:6px;" viewBox="0 0 22 6"><circle cx="4.7" cy="3" r="1.75" fill="#6b7280"/><circle cx="11.2" cy="3" r="1.75" fill="#6b7280"/><circle cx="17.7" cy="3" r="1.75" fill="#6b7280"/></svg>
<svg class="i" style="left:374.8px;top:539.08px;width:18px;height:18px;" viewBox="0 0 24 24"><path d="M12 12c2.21 0 4-1.79 4-4s-1.79-4-4-4-4 1.79-4 4 1.79 4 4 4zm0 2c-2.67 0-8 1.34-8 4v2h16v-2c0-2.66-5.33-4-8-4z" fill="#5f6672"/></svg>
<div class="t " style="left:401.6px;top:540.88px;font-size:15.5px;line-height:15.5px;color:#1b1b1b;letter-spacing:-0.26px">Rosemary Smith</div>
<div class="t " style="left:573.5px;top:540.88px;font-size:15.5px;line-height:15.5px;color:#1b1b1b;letter-spacing:-0.26px">Mary</div>
<div class="t " style="left:798.4px;top:540.88px;font-size:15.5px;line-height:15.5px;color:#1b1b1b;letter-spacing:-0.26px">mary@fuse.work</div>
<svg class="i" style="left:1275.9px;top:538.08px;width:19.5px;height:19.5px;" viewBox="0 0 24 24"><path d="M8 16h8v2H8zm0-4h8v2H8zm6-10H6c-1.1 0-2 .9-2 2v16c0 1.1.89 2 1.99 2H18c1.1 0 2-.9 2-2V8l-6-6zm4 18H6V4h7v5h5v11z" fill="#2e7d32"/></svg>
<div class="t " style="left:1300.4px;top:540.88px;font-size:15.5px;line-height:15.5px;color:#1b1b1b;letter-spacing:-0.340px">5 days ago</div>
<div class="t " style="left:1473.8px;top:540.88px;font-size:15.5px;line-height:15.5px;color:#1b1b1b;letter-spacing:-0.340px">3 days ago</div>
<div class="t " style="left:1683.6px;top:540.88px;font-size:15.5px;line-height:15.5px;color:#1b1b1b;letter-spacing:0.020px">Manual</div>
<div class="b" style="left:274px;top:572px;width:1593px;height:46px;background:#fff"></div>
<div class="b" style="left:274px;top:618px;width:1593px;height:1px;background:#e2e5ea"></div>
<div class="b" style="left:285px;top:584.38px;width:22px;height:22px;background:#e5e8ec;border:1px solid #e1e4e8;border-radius:4px"></div>
<svg class="i" style="left:330px;top:591.98px;width:22px;height:6px;" viewBox="0 0 22 6"><circle cx="4.7" cy="3" r="1.75" fill="#6b7280"/><circle cx="11.2" cy="3" r="1.75" fill="#6b7280"/><circle cx="17.7" cy="3" r="1.75" fill="#6b7280"/></svg>
<svg class="i" style="left:374.8px;top:586.08px;width:18px;height:18px;" viewBox="0 0 24 24"><path d="M12 12c2.21 0 4-1.79 4-4s-1.79-4-4-4-4 1.79-4 4 1.79 4 4 4zm0 2c-2.67 0-8 1.34-8 4v2h16v-2c0-2.66-5.33-4-8-4z" fill="#5f6672"/></svg>
<div class="t " style="left:401.6px;top:587.88px;font-size:15.5px;line-height:15.5px;color:#1b1b1b;letter-spacing:-0.26px">Roland</div>
<div class="t " style="left:798.4px;top:587.88px;font-size:15.5px;line-height:15.5px;color:#1b1b1b;letter-spacing:-0.26px">roland.mcnamara@fuse.work</div>
<div class="t " style="left:1079.3px;top:587.88px;font-size:15.5px;line-height:15.5px;color:#1b1b1b;letter-spacing:-0.26px">+61 478 144 218</div>
<svg class="i" style="left:1275.9px;top:585.08px;width:19.5px;height:19.5px;" viewBox="0 0 24 24"><path d="M8 16h8v2H8zm0-4h8v2H8zm6-10H6c-1.1 0-2 .9-2 2v16c0 1.1.89 2 1.99 2H18c1.1 0 2-.9 2-2V8l-6-6zm4 18H6V4h7v5h5v11z" fill="#9ca3af"/></svg>
<div class="t " style="left:1300.4px;top:587.88px;font-size:15.5px;line-height:15.5px;color:#1b1b1b;letter-spacing:-0.340px">13 days ago</div>
<div class="t " style="left:1473.8px;top:587.88px;font-size:15.5px;line-height:15.5px;color:#1b1b1b;letter-spacing:-0.010px">6 months ago</div>
<div class="t " style="left:1683.6px;top:587.88px;font-size:15.5px;line-height:15.5px;color:#1b1b1b;letter-spacing:0.020px">Manual</div>
<div class="b" style="left:274px;top:619px;width:1593px;height:46px;background:#f8f9fb"></div>
<div class="b" style="left:274px;top:665px;width:1593px;height:1px;background:#e2e5ea"></div>
<div class="b" style="left:285px;top:631.38px;width:22px;height:22px;background:#e5e8ec;border:1px solid #e1e4e8;border-radius:4px"></div>
<svg class="i" style="left:330px;top:638.98px;width:22px;height:6px;" viewBox="0 0 22 6"><circle cx="4.7" cy="3" r="1.75" fill="#6b7280"/><circle cx="11.2" cy="3" r="1.75" fill="#6b7280"/><circle cx="17.7" cy="3" r="1.75" fill="#6b7280"/></svg>
<svg class="i" style="left:375.2px;top:633.48px;width:17.5px;height:17.5px;" viewBox="0 0 24 24"><path d="M8.17 5.7 1 10.48V21h5v-8h4v8h5V10.25z M10 3v1.51l2 1.33L13.73 7H15v.85l2 1.34V11h2v2h-2v2h2v2h-2v4h6V3H10zm9 6h-2V7h2v2z" fill="#5f6672" fill-rule="evenodd"/></svg>
<div class="t " style="left:401.6px;top:634.88px;font-size:15.5px;line-height:15.5px;color:#1b1b1b;letter-spacing:-0.26px">Jackson Brigg</div>
<div class="t " style="left:798.4px;top:634.88px;font-size:15.5px;line-height:15.5px;color:#1b1b1b;letter-spacing:-0.26px">Jackson@fuse.work</div>
<div class="t " style="left:1079.3px;top:634.88px;font-size:15.5px;line-height:15.5px;color:#1b1b1b;letter-spacing:-0.26px">+61 417 008 980</div>
<svg class="i" style="left:1275.9px;top:632.08px;width:19.5px;height:19.5px;" viewBox="0 0 24 24"><path d="M8 16h8v2H8zm0-4h8v2H8zm6-10H6c-1.1 0-2 .9-2 2v16c0 1.1.89 2 1.99 2H18c1.1 0 2-.9 2-2V8l-6-6zm4 18H6V4h7v5h5v11z" fill="#2e7d32"/></svg>
<div class="t " style="left:1300.4px;top:634.88px;font-size:15.5px;line-height:15.5px;color:#1b1b1b;letter-spacing:-0.340px">13 days ago</div>
<div class="t " style="left:1473.8px;top:634.88px;font-size:15.5px;line-height:15.5px;color:#1b1b1b;letter-spacing:-0.340px">a year ago</div>
<div class="t " style="left:1683.6px;top:634.88px;font-size:15.5px;line-height:15.5px;color:#1b1b1b;letter-spacing:0.020px">Manual</div>
<div class="b" style="left:274px;top:666px;width:1593px;height:47px;background:#fff"></div>
<div class="b" style="left:274px;top:713px;width:1593px;height:1px;background:#e2e5ea"></div>
<div class="b" style="left:285px;top:679.38px;width:22px;height:22px;background:#fff;border:1px solid #ced4da;border-radius:4px"></div>
<svg class="i" style="left:330px;top:686.98px;width:22px;height:6px;" viewBox="0 0 22 6"><circle cx="4.7" cy="3" r="1.75" fill="#6b7280"/><circle cx="11.2" cy="3" r="1.75" fill="#6b7280"/><circle cx="17.7" cy="3" r="1.75" fill="#6b7280"/></svg>
<svg class="i" style="left:374.8px;top:681.08px;width:18px;height:18px;" viewBox="0 0 24 24"><path d="M12 12c2.21 0 4-1.79 4-4s-1.79-4-4-4-4 1.79-4 4 1.79 4 4 4zm0 2c-2.67 0-8 1.34-8 4v2h16v-2c0-2.66-5.33-4-8-4z" fill="#5f6672"/></svg>
<div class="t " style="left:401.6px;top:682.88px;font-size:15.5px;line-height:15.5px;color:#1b1b1b;letter-spacing:-0.26px">Jon Oakley</div>
<div class="t " style="left:798.4px;top:682.88px;font-size:15.5px;line-height:15.5px;color:#1b1b1b;letter-spacing:-0.26px">jon@fuse.work</div>
<div class="t " style="left:1079.3px;top:682.88px;font-size:15.5px;line-height:15.5px;color:#1b1b1b;letter-spacing:-0.26px">+44 7788 536620</div>
<svg class="i" style="left:1275.9px;top:680.08px;width:19.5px;height:19.5px;" viewBox="0 0 24 24"><path d="M8 16h8v2H8zm0-4h8v2H8zm6-10H6c-1.1 0-2 .9-2 2v16c0 1.1.89 2 1.99 2H18c1.1 0 2-.9 2-2V8l-6-6zm4 18H6V4h7v5h5v11z" fill="#9ca3af"/></svg>
<div class="t " style="left:1300.4px;top:682.88px;font-size:15.5px;line-height:15.5px;color:#1b1b1b;letter-spacing:-0.010px">2 months ago</div>
<div class="t " style="left:1473.8px;top:682.88px;font-size:15.5px;line-height:15.5px;color:#1b1b1b;letter-spacing:-0.340px">a year ago</div>
<div class="t " style="left:1683.6px;top:682.88px;font-size:15.5px;line-height:15.5px;color:#1b1b1b;letter-spacing:0.020px">Manual</div>
<div class="b" style="left:274px;top:714px;width:1593px;height:46px;background:#f8f9fb"></div>
<div class="b" style="left:274px;top:760px;width:1593px;height:1px;background:#e2e5ea"></div>
<div class="b" style="left:285px;top:726.38px;width:22px;height:22px;background:#fff;border:1px solid #ced4da;border-radius:4px"></div>
<svg class="i" style="left:330px;top:733.98px;width:22px;height:6px;" viewBox="0 0 22 6"><circle cx="4.7" cy="3" r="1.75" fill="#6b7280"/><circle cx="11.2" cy="3" r="1.75" fill="#6b7280"/><circle cx="17.7" cy="3" r="1.75" fill="#6b7280"/></svg>
<svg class="i" style="left:374.8px;top:728.08px;width:18px;height:18px;" viewBox="0 0 24 24"><path d="M12 12c2.21 0 4-1.79 4-4s-1.79-4-4-4-4 1.79-4 4 1.79 4 4 4zm0 2c-2.67 0-8 1.34-8 4v2h16v-2c0-2.66-5.33-4-8-4z" fill="#5f6672"/></svg>
<div class="t " style="left:401.6px;top:729.88px;font-size:15.5px;line-height:15.5px;color:#1b1b1b;letter-spacing:-0.26px">Mark Dunnell</div>
<div class="t " style="left:798.4px;top:729.88px;font-size:15.5px;line-height:15.5px;color:#1b1b1b;letter-spacing:-0.26px">mark.dunnell@fyi.app</div>
<svg class="i" style="left:1275.9px;top:727.08px;width:19.5px;height:19.5px;" viewBox="0 0 24 24"><path d="M8 16h8v2H8zm0-4h8v2H8zm6-10H6c-1.1 0-2 .9-2 2v16c0 1.1.89 2 1.99 2H18c1.1 0 2-.9 2-2V8l-6-6zm4 18H6V4h7v5h5v11z" fill="#9ca3af"/></svg>
<div class="t " style="left:1300.4px;top:729.88px;font-size:15.5px;line-height:15.5px;color:#1b1b1b;letter-spacing:-0.010px">3 months ago</div>
<div class="t " style="left:1473.8px;top:729.88px;font-size:15.5px;line-height:15.5px;color:#1b1b1b;letter-spacing:-0.010px">3 months ago</div>
<div class="t " style="left:1683.6px;top:729.88px;font-size:15.5px;line-height:15.5px;color:#1b1b1b;letter-spacing:0.020px">Manual</div>
<div class="b" style="left:274px;top:761px;width:1593px;height:46px;background:#fff"></div>
<div class="b" style="left:274px;top:807px;width:1593px;height:1px;background:#e2e5ea"></div>
<div class="b" style="left:285px;top:773.38px;width:22px;height:22px;background:#e5e8ec;border:1px solid #e1e4e8;border-radius:4px"></div>
<svg class="i" style="left:330px;top:780.98px;width:22px;height:6px;" viewBox="0 0 22 6"><circle cx="4.7" cy="3" r="1.75" fill="#6b7280"/><circle cx="11.2" cy="3" r="1.75" fill="#6b7280"/><circle cx="17.7" cy="3" r="1.75" fill="#6b7280"/></svg>
<svg class="i" style="left:375.2px;top:775.48px;width:17.5px;height:17.5px;" viewBox="0 0 24 24"><path d="M8.17 5.7 1 10.48V21h5v-8h4v8h5V10.25z M10 3v1.51l2 1.33L13.73 7H15v.85l2 1.34V11h2v2h-2v2h2v2h-2v4h6V3H10zm9 6h-2V7h2v2z" fill="#5f6672" fill-rule="evenodd"/></svg>
<div class="t " style="left:401.6px;top:776.88px;font-size:15.5px;line-height:15.5px;color:#1b1b1b;letter-spacing:-0.26px">Jon Melloy</div>
<div class="t " style="left:798.4px;top:776.88px;font-size:15.5px;line-height:15.5px;color:#1b1b1b;letter-spacing:-0.26px">jon.melloy@fuse.work</div>
<div class="t " style="left:1079.3px;top:776.88px;font-size:15.5px;line-height:15.5px;color:#1b1b1b;letter-spacing:-0.26px">+61 413 087 829</div>
<svg class="i" style="left:1275.9px;top:774.08px;width:19.5px;height:19.5px;" viewBox="0 0 24 24"><path d="M8 16h8v2H8zm0-4h8v2H8zm6-10H6c-1.1 0-2 .9-2 2v16c0 1.1.89 2 1.99 2H18c1.1 0 2-.9 2-2V8l-6-6zm4 18H6V4h7v5h5v11z" fill="#9ca3af"/></svg>
<div class="t " style="left:1300.4px;top:776.88px;font-size:15.5px;line-height:15.5px;color:#1b1b1b;letter-spacing:-0.010px">4 months ago</div>
<div class="t " style="left:1473.8px;top:776.88px;font-size:15.5px;line-height:15.5px;color:#1b1b1b;letter-spacing:-0.010px">9 months ago</div>
<div class="t " style="left:1683.6px;top:776.88px;font-size:15.5px;line-height:15.5px;color:#1b1b1b;letter-spacing:0.020px">Manual</div>
<div class="b" style="left:274px;top:808px;width:1593px;height:46px;background:#f8f9fb"></div>
<div class="b" style="left:274px;top:854px;width:1593px;height:1px;background:#e2e5ea"></div>
<div class="b" style="left:285px;top:820.38px;width:22px;height:22px;background:#fff;border:1px solid #ced4da;border-radius:4px"></div>
<svg class="i" style="left:330px;top:827.98px;width:22px;height:6px;" viewBox="0 0 22 6"><circle cx="4.7" cy="3" r="1.75" fill="#6b7280"/><circle cx="11.2" cy="3" r="1.75" fill="#6b7280"/><circle cx="17.7" cy="3" r="1.75" fill="#6b7280"/></svg>
<svg class="i" style="left:374.8px;top:822.08px;width:18px;height:18px;" viewBox="0 0 24 24"><path d="M12 12c2.21 0 4-1.79 4-4s-1.79-4-4-4-4 1.79-4 4 1.79 4 4 4zm0 2c-2.67 0-8 1.34-8 4v2h16v-2c0-2.66-5.33-4-8-4z" fill="#5f6672"/></svg>
<div class="t " style="left:401.6px;top:823.88px;font-size:15.5px;line-height:15.5px;color:#1b1b1b;letter-spacing:-0.26px">Hayden priest</div>
<div class="t " style="left:798.4px;top:823.88px;font-size:15.5px;line-height:15.5px;color:#1b1b1b;letter-spacing:-0.26px">h.priest@uhy-calvertsmith.com</div>
<div class="t " style="left:1079.3px;top:823.88px;font-size:15.5px;line-height:15.5px;color:#1b1b1b;letter-spacing:-0.26px">+44 7980 898088</div>
<svg class="i" style="left:1275.9px;top:821.08px;width:19.5px;height:19.5px;" viewBox="0 0 24 24"><path d="M8 16h8v2H8zm0-4h8v2H8zm6-10H6c-1.1 0-2 .9-2 2v16c0 1.1.89 2 1.99 2H18c1.1 0 2-.9 2-2V8l-6-6zm4 18H6V4h7v5h5v11z" fill="#9ca3af"/></svg>
<div class="t " style="left:1300.4px;top:823.88px;font-size:15.5px;line-height:15.5px;color:#1b1b1b;letter-spacing:-0.010px">4 months ago</div>
<div class="t " style="left:1473.8px;top:823.88px;font-size:15.5px;line-height:15.5px;color:#1b1b1b;letter-spacing:-0.010px">4 months ago</div>
<div class="t " style="left:1683.6px;top:823.88px;font-size:15.5px;line-height:15.5px;color:#1b1b1b;letter-spacing:0.020px">Manual</div>
<div class="b" style="left:274px;top:855px;width:1593px;height:46px;background:#fff"></div>
<div class="b" style="left:274px;top:901px;width:1593px;height:1px;background:#e2e5ea"></div>
<div class="b" style="left:285px;top:867.38px;width:22px;height:22px;background:#fff;border:1px solid #ced4da;border-radius:4px"></div>
<svg class="i" style="left:330px;top:874.98px;width:22px;height:6px;" viewBox="0 0 22 6"><circle cx="4.7" cy="3" r="1.75" fill="#6b7280"/><circle cx="11.2" cy="3" r="1.75" fill="#6b7280"/><circle cx="17.7" cy="3" r="1.75" fill="#6b7280"/></svg>
<svg class="i" style="left:374.8px;top:869.08px;width:18px;height:18px;" viewBox="0 0 24 24"><path d="M12 12c2.21 0 4-1.79 4-4s-1.79-4-4-4-4 1.79-4 4 1.79 4 4 4zm0 2c-2.67 0-8 1.34-8 4v2h16v-2c0-2.66-5.33-4-8-4z" fill="#5f6672"/></svg>
<div class="t " style="left:401.6px;top:870.88px;font-size:15.5px;line-height:15.5px;color:#1b1b1b;letter-spacing:-0.26px">Paul Freeman</div>
<div class="t " style="left:798.4px;top:870.88px;font-size:15.5px;line-height:15.5px;color:#1b1b1b;letter-spacing:-0.26px">paul.freeman@djh.co.uk</div>
<div class="t " style="left:1079.3px;top:870.88px;font-size:15.5px;line-height:15.5px;color:#1b1b1b;letter-spacing:-0.26px">+44 7512 307374</div>
<svg class="i" style="left:1275.9px;top:868.08px;width:19.5px;height:19.5px;" viewBox="0 0 24 24"><path d="M8 16h8v2H8zm0-4h8v2H8zm6-10H6c-1.1 0-2 .9-2 2v16c0 1.1.89 2 1.99 2H18c1.1 0 2-.9 2-2V8l-6-6zm4 18H6V4h7v5h5v11z" fill="#9ca3af"/></svg>
<div class="t " style="left:1300.4px;top:870.88px;font-size:15.5px;line-height:15.5px;color:#1b1b1b;letter-spacing:-0.010px">4 months ago</div>
<div class="t " style="left:1473.8px;top:870.88px;font-size:15.5px;line-height:15.5px;color:#1b1b1b;letter-spacing:-0.010px">4 months ago</div>
<div class="t " style="left:1683.6px;top:870.88px;font-size:15.5px;line-height:15.5px;color:#1b1b1b;letter-spacing:0.020px">Manual</div>
<div class="b" style="left:274px;top:902px;width:1593px;height:46px;background:#f8f9fb"></div>
<div class="b" style="left:274px;top:948px;width:1593px;height:1px;background:#e2e5ea"></div>
<div class="b" style="left:285px;top:914.38px;width:22px;height:22px;background:#fff;border:1px solid #ced4da;border-radius:4px"></div>
<svg class="i" style="left:330px;top:921.98px;width:22px;height:6px;" viewBox="0 0 22 6"><circle cx="4.7" cy="3" r="1.75" fill="#6b7280"/><circle cx="11.2" cy="3" r="1.75" fill="#6b7280"/><circle cx="17.7" cy="3" r="1.75" fill="#6b7280"/></svg>
<svg class="i" style="left:374.8px;top:916.08px;width:18px;height:18px;" viewBox="0 0 24 24"><path d="M12 12c2.21 0 4-1.79 4-4s-1.79-4-4-4-4 1.79-4 4 1.79 4 4 4zm0 2c-2.67 0-8 1.34-8 4v2h16v-2c0-2.66-5.33-4-8-4z" fill="#5f6672"/></svg>
<svg class="i" style="left:1275.9px;top:915.08px;width:19.5px;height:19.5px;" viewBox="0 0 24 24"><path d="M8 16h8v2H8zm0-4h8v2H8zm6-10H6c-1.1 0-2 .9-2 2v16c0 1.1.89 2 1.99 2H18c1.1 0 2-.9 2-2V8l-6-6zm4 18H6V4h7v5h5v11z" fill="#9ca3af"/></svg>
<svg class="i" style="left:536px;top:362px;width:24px;height:28px;" viewBox="0 0 24 28"><path d="M7.5 16.8 V3.7 Q7.5 2 9.15 2 Q10.8 2 10.8 3.7 V9.4 Q12.4 7.8 14 9.4 Q15.5 8.2 17 9.8 Q18.6 8.8 19.7 10.4 V19.5 Q19.7 25.5 12.5 25.5 Q9 25.5 6.8 22.8 L2.6 17.4 Q1.6 15.8 3 15 Q4.5 14.3 5.8 15.6Z" fill="#fff" stroke="#111" stroke-width="1.15" stroke-linejoin="round"/><path d="M10.8 9.5 V13.2 M14 9.6 V13.3 M17 10 V13.4" stroke="#111" stroke-width="1.05" stroke-linecap="round"/></svg>
</body></html>
